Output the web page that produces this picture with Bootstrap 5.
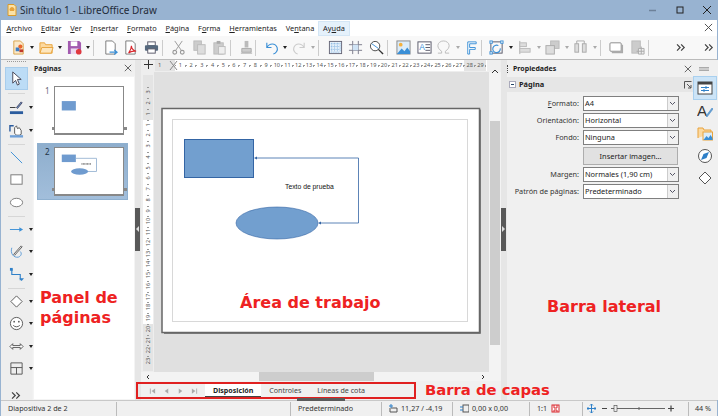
<!DOCTYPE html>
<html lang="es">
<head>
<meta charset="utf-8">
<title>LibreOffice Draw</title>
<link href="https://cdn.jsdelivr.net/npm/bootstrap@5.3.0/dist/css/bootstrap.min.css" rel="stylesheet">
<style>
html,body{margin:0;height:416px;width:718px;overflow:hidden;background:#f0f0f0}
body{font-family:"Noto Sans","Open Sans",sans-serif;font-size:8px;line-height:1;color:#333}
#app{width:718px;height:416px;position:relative;border-left:1px solid #98b3d1;border-right:1px solid #98b3d1;box-sizing:border-box}
.tbar{height:20px;background:#98b3d1;margin-left:-1px;margin-right:-1px;padding-left:7px;font-size:10px;color:#1f2b3a}
.tbar svg{width:10px;height:12px;margin-right:3px}
.wctl{margin-left:auto;margin-right:0;width:70px;padding-right:6px}
.wctl svg{width:10px;height:10px;margin:0}
.mbar{height:16px;background:#fff;padding-left:1px;position:relative}
.mitem{padding:0 4.4px;height:13px;line-height:13px;color:#222;font-size:7.4px}
.mitem u{text-decoration-thickness:.5px;text-underline-offset:1px}
.mitem.act{background:#e5f1fb;outline:1px solid #d4e6f5;margin-left:0}
.mclose{position:absolute;right:4px;top:3px;width:9px;height:9px}
.tool-row{height:23px;background:#f8f8f8;padding-left:8px}
.ti{width:20.5px;height:20px;flex:none}
.ti svg{width:15px;height:15px}
.ti.n{width:18px}
.car{width:10px;height:20px;flex:none}
.car:after{content:"";border-left:2.5px solid transparent;border-right:2.5px solid transparent;border-top:3px solid #222}
.car.g:after{border-top-color:#aaa}
.sep{width:7px;height:16px;flex:none}
.sep:after{content:"";width:1px;height:16px;background:#ccc}
.mainrow{height:341px;border-top:1px solid #bbb}
.lbar{width:31px;flex:none;background:#eee;position:relative}
.grip{height:6px;margin:1px 6px 0;border-top:1px dotted #999;flex:none}
.lrow{height:22.5px;padding-left:5px;flex:none}
.lrow .ti{width:21px;height:21px}
.lrow .car{width:7px}
.lrow .ti.on{background:#bcdcf6;outline:1px solid #a8cdec}
.lsep{height:1px;background:#d6d6d6;margin:2px 7px 1.5px 7px;flex:none}
.lsep.wide{margin:3px 7px 3px 7px}
.pgpanel{width:102px;flex:none;margin-left:1px;background:#f0f0f0}
.phead{height:16px;padding:0 3px 0 1px;font-weight:700;font-size:7px;color:#222;flex:none}
.phead svg{width:8px;height:8px}
.plist{background:#fff;flex:1;position:relative;border:1px solid #f4f4f4}
.pcell{margin:6px 7px 0 4px;height:55px;padding-left:16px;padding-top:3px;position:relative}
.pcell:before,.pcell:after{content:"";position:absolute;top:44px;width:3px;height:3px;background:#888}
.pcell:before{left:14px}
.pcell:after{left:86px}
.pcell.sel{background:linear-gradient(#8eaecd,#a2bedb);outline:1px solid #8fb0cf}
.pnum{position:absolute;left:7px;top:4px;font-size:8px;color:#667}
.pcell.sel .pnum{color:#234}
.pthumb{width:70px;height:49px;background:#fff;border:1px solid #888;border-bottom-width:2px;display:block}
.split{width:6px;flex:none;background:#e6e6e6;position:relative}
.shandle{position:absolute;top:148px;height:43px;left:0;width:5px;background:#585858}
.shandle:after{content:"";position:absolute;top:18px;border-top:3px solid transparent;border-bottom:3px solid transparent}
.shandle.l:after{left:1px;border-right:3px solid #ddd}
.shandle.r:after{left:1px;border-left:3px solid #ddd}
.center{width:360px;flex:none}
.hrow{height:12px;background:#eee}
.cross{width:14px;flex:none;padding-left:3px}
.cross svg{width:9px;height:9px}
.hr-ruler{width:332px;height:11px;background:#fff;font-size:6px;color:#555;position:relative;flex:none;overflow:hidden;margin-left:0}
.rgl{background:#e4e4e4;width:20px;height:11px;flex:none;padding-left:3px;line-height:11px;font-size:5.8px}
.rx{position:absolute;left:14px;top:1px;width:9px;height:9px}
.rnum{width:10.72px;text-align:center;flex:none;line-height:11px;font-size:5.6px;background:linear-gradient(#999,#999) no-repeat 0 50%/1px 1px,linear-gradient(#999,#999) no-repeat 100% 50%/1px 2px}
.rnum.gr{background-color:#e4e4e4}
.crow{height:300px}
.vr-wrap{width:13px;flex:none;background:#eee;padding:3px 1px 0 2px}
.vr-ruler{background:#fff;height:296px;width:10px;font-size:5.6px;color:#555;overflow:hidden}
.vgl{background:#e4e4e4;height:45px;flex:none;width:100%}
.vgl2{background:#e4e4e4;flex:1;width:100%}
.vnum{height:10.76px;flex:none;width:100%;text-align:center;line-height:10px;background:linear-gradient(#999,#999) no-repeat 50% 0/2px 1px}
.vnum span{display:inline-block;transform:rotate(-90deg)}
.wsp{width:335px;flex:none;background:#e0e0e0}
.wsp svg{display:block;width:335px;height:300px}
.vsb{width:12px;flex:none;background:#f3f3f3;position:relative;padding-top:0}
.vsb i{display:block;height:224px;margin-top:49px;background:#cdcdcd;width:10px;margin-left:1px}
.sbup{position:absolute;left:2px;top:-4px;width:8px;height:6px}
.hsb{height:10px;background:#f3f3f3;position:relative}
.hsb i{display:block;position:absolute;left:118px;width:115px;height:10px;background:#cdcdcd}
.hsb svg{position:absolute;top:2px;width:6px;height:6px}
.hsb svg.hr{left:339px}
.laybar{height:19px;background:#f0f0f0;position:relative;padding-left:4px}
.lnav{width:14px;flex:none;height:12px}
.lnav svg{width:7px;height:8px}
.ltab{height:13px;padding:0 8px;line-height:12px;font-size:7.1px;color:#444;flex:none}
.ltab.cur{font-weight:700;background:#fff;border-bottom:1.5px solid #444;color:#222;padding:0 8px;margin-left:4px;font-size:7.1px}
.sideb{width:213px;flex:none;background:#f0f0f0;position:relative}
.spanel{width:187px;flex:none}
.shead{height:17px;padding:0 2px 0 0;font-weight:700;font-size:7px;color:#222;flex:none}
.shead svg{width:8px;height:8px}
.dots{width:5px;height:8px;border-left:1px dotted #444;margin-right:1px;margin-left:0}
.sec{height:15px;background:#e6e6e6;font-weight:700;padding:0 2px;font-size:7.4px;color:#222;flex:none}
.secm{width:7px;height:7px;border:1px solid #aab;background:#fff;margin-right:3px;position:relative;flex:none}
.secm:after{content:"";position:absolute;left:1px;top:2px;width:3px;height:1px;background:#246}
.sec svg{width:8px;height:8px}
.frow{height:15px;margin-bottom:2px;flex:none}
.flab{width:72px;text-align:right;font-size:7.3px;color:#333;margin-right:4px;flex:none;white-space:nowrap}
.fsel{width:96px;height:15px;background:#fff;border:1px solid #7f7f7f;font-size:7.4px;padding-left:1px;color:#222;flex:none;position:relative;line-height:13px}
.fsel b{position:absolute;right:0;top:0;width:11px;height:13px;background:#f0f0f0;border-left:1px solid #ccc}
.fsel svg{position:absolute;right:2px;top:4px;width:7px;height:5px}
.ibtn{width:95px;height:18px;background:#e1e1e1;border:1px solid #adadad;border-radius:0;font-size:7.4px;color:#222;padding:0;margin:0 0 2px 76px;line-height:14px;flex:none}
.stabs{width:23px;flex:none;padding-top:0}
.tabh{height:17px;flex:none}
.tabh i{display:block;width:10px;height:4px;border-top:1px solid #aaa;border-bottom:1px solid #aaa;background:#ccc;margin-left:5px}
.tabi{width:22px;height:22px;margin-bottom:.5px;flex:none}
.tabi.on{background:#cce4f7;outline:1px solid #a9d0ef}
.tabi svg{width:16px;height:16px}
.stat{height:16px;background:#f0f0f0;border-top:1px solid #c8c8c8;font-size:7.2px;color:#333;margin-left:0}
.stc{height:14px;flex:none;border-right:1px solid #bbb;padding-left:7px;white-space:nowrap}
.stc svg{width:9px;height:9px;margin-right:3px;flex:none}
.st1{width:116px}.st2{width:174px}.st3{width:91px}.st4{width:71px}.st5{width:77px}.st6{width:53px}.st7{width:106px;padding-left:4px}.st8{width:28px;padding-left:6px}
.zslg{width:74px!important;height:9px!important;margin:0!important}
.zsl{margin-left:3px}
.notes{color:#ee2222;font-family:"DejaVu Sans",sans-serif;font-weight:700;font-size:16px;line-height:19.5px;position:absolute;white-space:nowrap}
.npanel{left:39px;top:288px}
.narea{left:239px;top:293px}
.nlat{left:546px;top:297px}
.ncap{left:424px;top:380px;font-size:14.8px}
.redbox{position:absolute;left:135px;top:382px;width:280px;height:17px;border:2px solid #e02020}
.hdl2{position:absolute;left:296px;top:398px;width:48px;height:3px;background:#5a5a5a}
</style>
</head>
<body>
<svg width="0" height="0" class="d-none">
<defs>
<symbol id="x" viewBox="0 0 10 10"><path d="M1 1l8 8M9 1l-8 8" stroke="#444" stroke-width="1" fill="none"/></symbol>
<symbol id="dn" viewBox="0 0 7 5"><path d="M1 1l2.5 2.5L6 1" stroke="#556" fill="none"/></symbol>
<symbol id="new" viewBox="0 0 16 16"><path d="M3 1h7l3 3v11H3z" fill="#fbe9c9" stroke="#d9a24a"/><rect x="5" y="8" width="4" height="4" fill="#3f7fc4"/><circle cx="10" cy="7" r="2.2" fill="#e9662c"/><path d="M9 10h4v3H9z" fill="#c0392b"/></symbol>
<symbol id="open" viewBox="0 0 16 16"><path d="M1 14V3h5l1 2h7v9z" fill="#fcd9a0" stroke="#e8a33c"/><path d="M1 14l2-6h12l-2 6z" fill="#fde6bd" stroke="#e8a33c"/></symbol>
<symbol id="save" viewBox="0 0 16 16"><path d="M1 1h12l2 2v12H1z" fill="#a35bb0"/><rect x="4" y="1.500" width="7" height="5" fill="#fff"/><rect x="4" y="9" width="8" height="6" fill="#ecd9ef"/><circle cx="12.500" cy="12.500" r="3" fill="#e0393e"/></symbol>
<symbol id="exp" viewBox="0 0 16 16"><path d="M3 1h7l3 3v11H3z" fill="#fff" stroke="#777"/><path d="M7 13h8M12 10.500l3 2.500-3 2.500" stroke="#3a8fd6" fill="none" stroke-width="1.300"/></symbol>
<symbol id="pdf" viewBox="0 0 16 16"><path d="M3 1h7l3 3v11H3z" fill="#fff" stroke="#777"/><path d="M6 14c2-3 3-6 3-8 0 3 2 5 5 6-3-.5-6 0-8 2z" fill="none" stroke="#d9262c" stroke-width="1.200"/></symbol>
<symbol id="prn" viewBox="0 0 16 16"><rect x="4" y="2" width="8" height="4" fill="#fff" stroke="#556"/><rect x="1" y="5.500" width="14" height="6" rx="1" fill="#55697e"/><rect x="4" y="9.500" width="8" height="4.500" fill="#fff" stroke="#556"/></symbol>
<symbol id="cut" viewBox="0 0 16 16"><path d="M4 1l7 10M12 1L5 11" stroke="#999" fill="none"/><circle cx="4" cy="13" r="2" fill="none" stroke="#999" stroke-width="1.200"/><circle cx="12" cy="13" r="2" fill="none" stroke="#999" stroke-width="1.200"/></symbol>
<symbol id="cpy" viewBox="0 0 16 16"><rect x="2" y="1" width="8" height="10" fill="#ccc" stroke="#bbb"/><rect x="6" y="5" width="8" height="10" fill="#ddd" stroke="#bbb"/></symbol>
<symbol id="pst" viewBox="0 0 16 16"><rect x="2" y="3" width="10" height="12" fill="#ccc" stroke="#bbb"/><rect x="5" y="1" width="4" height="3" fill="#aaa"/><rect x="7" y="7" width="7" height="8" fill="#eee" stroke="#bbb"/></symbol>
<symbol id="cln" viewBox="0 0 16 16"><rect x="6" y="1" width="4" height="7" fill="#bbb"/><path d="M3 9h10v4H3z" fill="#ccc" stroke="#aaa"/><path d="M2 14h12" stroke="#aaa"/></symbol>
<symbol id="und" viewBox="0 0 16 16"><path d="M3 3v5h5M3 8c3-5 9-5 11 0 1 3-1 6-4 7" fill="none" stroke="#3a8fd6" stroke-width="1.200"/></symbol>
<symbol id="red" viewBox="0 0 16 16"><path d="M13 3v5H8M13 8C10 3 4 3 2 8c-1 3 1 6 4 7" fill="none" stroke="#ccc" stroke-width="1.200"/></symbol>
<symbol id="grd" viewBox="0 0 16 16"><rect x="1.500" y="1.500" width="13" height="13" fill="#eaf3fb" stroke="#667"/><path d="M4 3v10M7 3v10M10 3v10M13 3v10M3 4h10M3 7h10M3 10h10M3 13h10" stroke="#5a9ad6" stroke-width=".7" stroke-dasharray="1 1"/></symbol>
<symbol id="hlp" viewBox="0 0 16 16"><path d="M5 1v14M11 1v14M1 5h14M1 11h14" stroke="#778" fill="none"/><rect x="5" y="5" width="6" height="6" fill="#cfe3f5"/></symbol>
<symbol id="zom" viewBox="0 0 16 16"><circle cx="6.500" cy="6.500" r="5" fill="#fff" stroke="#444"/><path d="M10 10l5 5" stroke="#333" stroke-width="1.500"/><path d="M3 4l7 5" stroke="#3a8fd6"/></symbol>
<symbol id="img" viewBox="0 0 16 16"><rect x="1" y="1" width="14" height="14" fill="#dcecf9" stroke="#888"/><circle cx="5" cy="5" r="2" fill="#f5b03c"/><path d="M1 15l5-6 3 3 3-4 3 4v3z" fill="#3a8fd6"/></symbol>
<symbol id="txb" viewBox="0 0 16 16"><rect x="1" y="2" width="14" height="12" fill="#fff" stroke="#556"/><text x="2.500" y="11" font-family="Liberation Sans" font-size="9" fill="#3a8fd6">A</text><path d="M9 5h5M9 8h5M9 11h5" stroke="#556"/></symbol>
<symbol id="omg" viewBox="0 0 16 16"><path d="M2 14h4v-2C3 10 2 8 2 6c0-3 3-5 6-5s6 2 6 5c0 2-1 4-4 6v2h4" fill="none" stroke="#bbb"/></symbol>
<symbol id="fwk" viewBox="0 0 16 16"><path d="M4 2h9v2H6v4h6v2H6v5H4z" fill="#fff" stroke="#3a8fd6"/></symbol>
<symbol id="pts" viewBox="0 0 16 16"><rect x="2" y="2" width="12" height="12" fill="none" stroke="#556"/><path d="M12 9a4 4 0 1 1-2-3" fill="none" stroke="#3a8fd6" stroke-width="1.200"/><g fill="#fff" stroke="#3a8fd6"><rect x="1" y="1" width="2.500" height="2.500"/><rect x="12.500" y="1" width="2.500" height="2.500"/><rect x="1" y="12.500" width="2.500" height="2.500"/></g></symbol>
<symbol id="aln" viewBox="0 0 16 16"><path d="M3 1v14" stroke="#aaa"/><rect x="3" y="3" width="7" height="4" fill="#ddd" stroke="#bbb"/><rect x="3" y="9" width="11" height="4" fill="#ddd" stroke="#bbb"/></symbol>
<symbol id="arr" viewBox="0 0 16 16"><rect x="6" y="1" width="9" height="8" fill="#ccc" stroke="#bbb"/><rect x="1" y="6" width="9" height="9" fill="#ddd" stroke="#aaa"/></symbol>
<symbol id="dst" viewBox="0 0 16 16"><rect x="2" y="4" width="4" height="9" fill="#ddd" stroke="#aaa"/><rect x="10" y="4" width="4" height="9" fill="#ddd" stroke="#aaa"/><path d="M4 1v3M12 1v3M4 1h8" stroke="#aaa" fill="none"/></symbol>
<symbol id="shd" viewBox="0 0 16 16"><rect x="1" y="3" width="12" height="9" rx="1" fill="#fff" stroke="#888"/><path d="M14 5v8H3" stroke="#aaa" stroke-width="2" fill="none"/></symbol>
<symbol id="crp" viewBox="0 0 16 16"><rect x="2" y="1" width="9" height="13" fill="#ccc" stroke="#bbb"/><path d="M9 9h6v6H9z" fill="#eee" stroke="#aaa"/><path d="M12 7v8M7 12h8" stroke="#aaa"/></symbol>
<symbol id="mor" viewBox="0 0 10 8"><path d="M1 1l3 3-3 3M5 1l3 3-3 3" fill="none" stroke="#444" stroke-width="1.200"/></symbol>
<symbol id="sel" viewBox="0 0 16 16"><path d="M4 1v12l3-3 2 5 2-1-2-5h4z" fill="#fff" stroke="#445"/></symbol>
<symbol id="lnc" viewBox="0 0 16 16"><path d="M8 8l5-6 1 1-5 6z" fill="#6fa0cf" stroke="#446"/><path d="M1 8h6" stroke="#333"/><rect x="1" y="12" width="14" height="3" fill="#2b5c9e"/></symbol>
<symbol id="flc" viewBox="0 0 16 16"><path d="M1 9V3h4" stroke="#2b5c9e" fill="none" stroke-width="1.500"/><path d="M6 11V5l2-2 1 3 2-1 2 3v4l-2 1H8z" fill="#fff" stroke="#555"/><rect x="1" y="13" width="14" height="2.500" fill="#6fa0d8"/></symbol>
<symbol id="lin" viewBox="0 0 16 16"><path d="M2 2l12 12" stroke="#3a8fd6" fill="none" stroke-width="1"/></symbol>
<symbol id="rct" viewBox="0 0 16 16"><rect x="2" y="3" width="12" height="10" fill="#fff" stroke="#777"/></symbol>
<symbol id="ell" viewBox="0 0 16 16"><ellipse cx="8" cy="8" rx="6.500" ry="4.500" fill="#fff" stroke="#777"/></symbol>
<symbol id="arw" viewBox="0 0 16 16"><path d="M1 8h11" stroke="#3a8fd6"/><path d="M11 5.500L15 8l-4 2.500z" fill="#3a8fd6"/></symbol>
<symbol id="crv" viewBox="0 0 16 16"><path d="M3 4c-2 6 2 11 7 10 3-1 4-4 2-6" fill="none" stroke="#5a9ad6"/><path d="M5 11l8-9 1 1-8 9z" fill="#fff" stroke="#555"/></symbol>
<symbol id="con" viewBox="0 0 16 16"><path d="M3 2v6h9v6" fill="none" stroke="#2f80c8" stroke-width="1.200"/><rect x="1" y="1" width="3" height="3" fill="#2f80c8"/><path d="M11 12h5l-2.500 3z" fill="#2f80c8"/></symbol>
<symbol id="dmd" viewBox="0 0 16 16"><path d="M8 2l6 6-6 6-6-6z" fill="#fff" stroke="#555"/></symbol>
<symbol id="sml" viewBox="0 0 16 16"><circle cx="8" cy="8" r="6.500" fill="#fff" stroke="#555"/><circle cx="5.500" cy="6" r=".9" fill="#555"/><circle cx="10.500" cy="6" r=".9" fill="#555"/><path d="M4.500 10c2 2 5 2 7 0" fill="none" stroke="#555"/></symbol>
<symbol id="dbl" viewBox="0 0 16 16"><path d="M1 8l3-3v2h8V5l3 3-3 3V9H4v2z" fill="#fff" stroke="#555"/></symbol>
<symbol id="tbl" viewBox="0 0 16 16"><path d="M2 2h12v12H2zM2 7h12M8 7v7" fill="none" stroke="#555"/></symbol>
<symbol id="tprop" viewBox="0 0 16 16"><rect x="1" y="2" width="14" height="12" fill="#fff" stroke="#444"/><rect x="1" y="2" width="14" height="2.500" fill="#444"/><path d="M4 7.500h8M4 10.500h8" stroke="#2f80c8"/><path d="M9 6v3M7 9v3" stroke="#2f80c8"/></symbol>
<symbol id="tsty" viewBox="0 0 16 16"><text x="0" y="13" font-family="Liberation Sans" font-size="15" fill="#333">A</text><path d="M9 13l6-8 1 1-6 8z" fill="#6fa0cf" stroke="#2f80c8" stroke-width=".5"/></symbol>
<symbol id="tgal" viewBox="0 0 16 16"><path d="M1 13V3h5l1 2h7v3" fill="#fcd9a0" stroke="#e8a33c"/><rect x="6" y="7" width="9.500" height="8" fill="#dcecf9" stroke="#e8a33c"/><path d="M6.500 15l3-4 2 2 2-3 2 3v2z" fill="#3a8fd6"/></symbol>
<symbol id="tnav" viewBox="0 0 16 16"><circle cx="8" cy="8" r="6.500" fill="#fff" stroke="#555"/><path d="M12 4l-2.500 6L4 12l2.500-6z" fill="#2f80c8"/></symbol>
<symbol id="pl" viewBox="0 0 8 8"><path d="M6 1L2 4l4 3z" fill="#aaa"/></symbol>
<symbol id="pr" viewBox="0 0 8 8"><path d="M2 1l4 3-4 3z" fill="#aaa"/></symbol>
<symbol id="pf" viewBox="0 0 8 8"><path d="M7 1L3 4l4 3zM1 1h1v6H1z" fill="#aaa"/></symbol>
<symbol id="pe" viewBox="0 0 8 8"><path d="M1 1l4 3-4 3zM6 1h1v6H6z" fill="#aaa"/></symbol>
</defs>
</svg>

<div id="app" class="d-flex flex-column">
  <div class="tbar d-flex align-items-center">
    <svg viewBox="0 0 10 12"><path d="M1 .5h6l2 2v9H1z" fill="#fbe2a8" stroke="#d99a2b"/><path d="M3 7a2.500 2.500 0 1 1 4 0z" fill="#e8a33c"/></svg>
    <span>Sin título 1 - LibreOffice Draw</span>
    <div class="wctl d-flex align-items-center justify-content-between">
      <svg viewBox="0 0 10 10"><path d="M1 5.500h7" stroke="#6d8199" stroke-width="1.500"/></svg>
      <svg viewBox="0 0 10 10"><rect x="2" y="2" width="6" height="6" fill="none" stroke="#222" stroke-width="1"/></svg>
      <svg viewBox="0 0 10 10"><path d="M1 1l8 8M9 1l-8 8" stroke="#222" fill="none"/></svg>
    </div>
  </div>
  <div class="mbar d-flex align-items-center">
    <span class="mitem"><u>A</u>rchivo</span><span class="mitem"><u>E</u>ditar</span><span class="mitem"><u>V</u>er</span><span class="mitem"><u>I</u>nsertar</span><span class="mitem"><u>F</u>ormato</span><span class="mitem"><u>P</u>ágina</span><span class="mitem">F<u>o</u>rma</span><span class="mitem"><u>H</u>erramientas</span><span class="mitem">Ve<u>n</u>tana</span><span class="mitem act">Ay<u>u</u>da</span>
    <svg class="mclose"><use href="#x"/></svg>
  </div>
  <div class="tool-row d-flex align-items-center">
    <span class="ti n d-flex align-items-center justify-content-center"><svg><use href="#new"/></svg></span><span class="car d-flex align-items-center justify-content-center"></span>
    <span class="ti n d-flex align-items-center justify-content-center"><svg><use href="#open"/></svg></span><span class="car d-flex align-items-center justify-content-center"></span>
    <span class="ti n d-flex align-items-center justify-content-center"><svg><use href="#save"/></svg></span><span class="car d-flex align-items-center justify-content-center"></span>
    <span class="sep d-flex align-items-center justify-content-start"></span>
    <span class="ti d-flex align-items-center justify-content-center"><svg><use href="#exp"/></svg></span>
    <span class="ti d-flex align-items-center justify-content-center"><svg><use href="#pdf"/></svg></span>
    <span class="ti d-flex align-items-center justify-content-center"><svg><use href="#prn"/></svg></span>
    <span class="sep d-flex align-items-center justify-content-start"></span>
    <span class="ti d-flex align-items-center justify-content-center"><svg><use href="#cut"/></svg></span>
    <span class="ti d-flex align-items-center justify-content-center"><svg><use href="#cpy"/></svg></span>
    <span class="ti d-flex align-items-center justify-content-center"><svg><use href="#pst"/></svg></span>
    <span class="sep d-flex align-items-center justify-content-start"></span>
    <span class="ti n d-flex align-items-center justify-content-center"><svg><use href="#cln"/></svg></span>
    <span class="sep d-flex align-items-center justify-content-start"></span>
    <span class="ti n d-flex align-items-center justify-content-center"><svg><use href="#und"/></svg></span><span class="car d-flex align-items-center justify-content-center"></span>
    <span class="ti n d-flex align-items-center justify-content-center"><svg><use href="#red"/></svg></span><span class="car g d-flex align-items-center justify-content-center"></span>
    <span class="sep d-flex align-items-center justify-content-start"></span>
    <span class="ti d-flex align-items-center justify-content-center"><svg><use href="#grd"/></svg></span>
    <span class="ti d-flex align-items-center justify-content-center"><svg><use href="#hlp"/></svg></span>
    <span class="ti d-flex align-items-center justify-content-center"><svg><use href="#zom"/></svg></span>
    <span class="sep d-flex align-items-center justify-content-start"></span>
    <span class="ti d-flex align-items-center justify-content-center"><svg><use href="#img"/></svg></span>
    <span class="ti d-flex align-items-center justify-content-center"><svg><use href="#txb"/></svg></span>
    <span class="ti n d-flex align-items-center justify-content-center"><svg><use href="#omg"/></svg></span><span class="car g d-flex align-items-center justify-content-center"></span>
    <span class="ti n d-flex align-items-center justify-content-center"><svg><use href="#fwk"/></svg></span>
    <span class="sep d-flex align-items-center justify-content-start"></span>
    <span class="ti n d-flex align-items-center justify-content-center"><svg><use href="#pts"/></svg></span><span class="car d-flex align-items-center justify-content-center"></span>
    <span class="ti n d-flex align-items-center justify-content-center"><svg><use href="#aln"/></svg></span><span class="car g d-flex align-items-center justify-content-center"></span>
    <span class="ti n d-flex align-items-center justify-content-center"><svg><use href="#arr"/></svg></span><span class="car g d-flex align-items-center justify-content-center"></span>
    <span class="ti n d-flex align-items-center justify-content-center"><svg><use href="#dst"/></svg></span><span class="car g d-flex align-items-center justify-content-center"></span>
    <span class="sep d-flex align-items-center justify-content-start"></span>
    <span class="ti d-flex align-items-center justify-content-center"><svg><use href="#shd"/></svg></span>
    <span class="ti d-flex align-items-center justify-content-center"><svg><use href="#crp"/></svg></span>
    <span class="sep d-flex align-items-center justify-content-start"></span>
    <span class="ti d-flex align-items-center justify-content-center ms-3"><svg class="w-50"><use href="#mor"/></svg></span>
    <span class="ti d-flex align-items-center justify-content-center ms-2"><svg class="w-50"><use href="#mor"/></svg></span>
  </div>

  <div class="mainrow d-flex">
    <div class="lbar d-flex flex-column">
      <div class="grip"></div>
      <div class="lrow d-flex align-items-center"><span class="ti on d-flex align-items-center justify-content-center"><svg><use href="#sel"/></svg></span></div>
      <div class="lsep wide"></div>
      <div class="lrow d-flex align-items-center"><span class="ti d-flex align-items-center justify-content-center"><svg><use href="#lnc"/></svg></span><span class="car d-flex align-items-center justify-content-center"></span></div>
      <div class="lrow d-flex align-items-center"><span class="ti d-flex align-items-center justify-content-center"><svg><use href="#flc"/></svg></span><span class="car d-flex align-items-center justify-content-center"></span></div>
      <div class="lsep"></div>
      <div class="lrow d-flex align-items-center"><span class="ti d-flex align-items-center justify-content-center"><svg><use href="#lin"/></svg></span></div>
      <div class="lrow d-flex align-items-center"><span class="ti d-flex align-items-center justify-content-center"><svg><use href="#rct"/></svg></span></div>
      <div class="lrow d-flex align-items-center"><span class="ti d-flex align-items-center justify-content-center"><svg><use href="#ell"/></svg></span></div>
      <div class="lsep"></div>
      <div class="lrow d-flex align-items-center"><span class="ti d-flex align-items-center justify-content-center"><svg><use href="#arw"/></svg></span><span class="car d-flex align-items-center justify-content-center"></span></div>
      <div class="lrow d-flex align-items-center"><span class="ti d-flex align-items-center justify-content-center"><svg><use href="#crv"/></svg></span><span class="car d-flex align-items-center justify-content-center"></span></div>
      <div class="lrow d-flex align-items-center"><span class="ti d-flex align-items-center justify-content-center"><svg><use href="#con"/></svg></span><span class="car d-flex align-items-center justify-content-center"></span></div>
      <div class="lsep"></div>
      <div class="lrow d-flex align-items-center"><span class="ti d-flex align-items-center justify-content-center"><svg><use href="#dmd"/></svg></span><span class="car d-flex align-items-center justify-content-center"></span></div>
      <div class="lrow d-flex align-items-center"><span class="ti d-flex align-items-center justify-content-center"><svg><use href="#sml"/></svg></span><span class="car d-flex align-items-center justify-content-center"></span></div>
      <div class="lrow d-flex align-items-center"><span class="ti d-flex align-items-center justify-content-center"><svg><use href="#dbl"/></svg></span><span class="car d-flex align-items-center justify-content-center"></span></div>
      <div class="lrow d-flex align-items-center"><span class="ti d-flex align-items-center justify-content-center"><svg><use href="#tbl"/></svg></span><span class="car d-flex align-items-center justify-content-center"></span></div>
      <div class="lrow d-flex align-items-center mt-1"><span class="ti d-flex align-items-center justify-content-center"><svg class="w-50"><use href="#mor"/></svg></span></div>
    </div>

    <div class="pgpanel d-flex flex-column">
      <div class="phead d-flex align-items-center justify-content-between"><span>Páginas</span><svg><use href="#x"/></svg></div>
      <div class="plist">
        <div class="pcell"><span class="pnum">1</span>
          <svg class="pthumb" viewBox="0 0 70 49"><rect x="6" y="15" width="15" height="10" fill="#6f9bcf"/></svg>
        </div>
        <div class="pcell sel"><span class="pnum">2</span>
          <svg class="pthumb" viewBox="0 0 70 49"><rect x="6" y="7" width="15" height="8" fill="#6f9bcf"/><path d="M21 11h22v14H33" fill="none" stroke="#9db7d4"/><path d="M27 17h10" stroke="#222" stroke-dasharray="1 .5"/><ellipse cx="25" cy="25" rx="9" ry="3.500" fill="#6f9bcf"/></svg>
        </div>
      </div>
    </div>
    <div class="split"><span class="shandle l"></span></div>

    <div class="center d-flex flex-column">
      <div class="hrow d-flex">
        <div class="cross"><svg viewBox="0 0 9 9"><path d="M4.500 0v9M0 4.500h9" stroke="#333"/></svg></div>
        <div class="hr-ruler d-flex">
          <div class="rgl">1</div>
          <svg class="rx" viewBox="0 0 9 9"><path d="M1 0l7 9M8 0L1 9" stroke="#888" fill="none"/></svg>
          <span class="rnum">1</span><span class="rnum">2</span><span class="rnum">3</span><span class="rnum">4</span><span class="rnum">5</span><span class="rnum">6</span><span class="rnum">7</span><span class="rnum">8</span><span class="rnum">9</span><span class="rnum">10</span><span class="rnum">11</span><span class="rnum">12</span><span class="rnum">13</span><span class="rnum">14</span><span class="rnum">15</span><span class="rnum">16</span><span class="rnum">17</span><span class="rnum">18</span><span class="rnum">19</span><span class="rnum">20</span><span class="rnum">21</span><span class="rnum">22</span><span class="rnum">23</span><span class="rnum">24</span><span class="rnum">25</span><span class="rnum">26</span><span class="rnum">27</span><span class="rnum gr">28</span><span class="rnum gr">29</span>
        </div>
      </div>
      <div class="crow d-flex">
        <div class="vr-wrap">
          <div class="vr-ruler d-flex flex-column">
            <div class="vgl d-flex flex-column justify-content-end"><div class="vnum"><span>3</span></div><div class="vnum"><span>2</span></div><div class="vnum"><span>1</span></div></div>
            <div class="vnum"><span>1</span></div><div class="vnum"><span>2</span></div><div class="vnum"><span>3</span></div><div class="vnum"><span>4</span></div><div class="vnum"><span>5</span></div><div class="vnum"><span>6</span></div><div class="vnum"><span>7</span></div><div class="vnum"><span>8</span></div><div class="vnum"><span>9</span></div><div class="vnum"><span>10</span></div><div class="vnum"><span>11</span></div><div class="vnum"><span>12</span></div><div class="vnum"><span>13</span></div><div class="vnum"><span>14</span></div><div class="vnum"><span>15</span></div><div class="vnum"><span>16</span></div><div class="vnum"><span>17</span></div><div class="vnum"><span>18</span></div><div class="vnum"><span>19</span></div>
            <div class="vgl2 text-center"><div class="vnum"><span>20</span></div><div class="vnum"><span>21</span></div><div class="vnum"><span>22</span></div><div class="vnum"><span>23</span></div></div>
          </div>
        </div>
        <div class="wsp">
          <svg viewBox="154 72 335 300">
            <rect x="162" y="108.500" width="317.500" height="224" fill="#fff" stroke="#666" stroke-width="1.500"/>
            <path d="M480.500 109.500v224H164" fill="none" stroke="#777" stroke-width="1"/>
            <rect x="172.500" y="119.500" width="295" height="202" fill="none" stroke="#d8d8d8"/>
            <rect x="184.500" y="139.500" width="69" height="38" fill="#729fcf" stroke="#3465a4"/>
            <path d="M256 158h102.500v65H320" fill="none" stroke="#3465a4" stroke-width=".8"/>
            <path d="M254 158l3-1.500v3zM318 223l3-1.500v3z" fill="#3465a4"/>
            <ellipse cx="277" cy="223" rx="41" ry="16" fill="#729fcf" stroke="#3465a4" stroke-width=".6"/>
            <text x="285" y="188.500" font-family="Liberation Sans" font-size="6.800" fill="#111">Texto de prueba</text>
          </svg>
        </div>
        <div class="vsb"><svg class="sbup" viewBox="0 0 8 6"><path d="M1 5l3-3 3 3" stroke="#333" fill="none"/></svg><i></i></div>
      </div>
      <div class="hsb"><svg class="ms-1" viewBox="0 0 6 6"><path d="M4 1L2 3l2 2" stroke="#333" fill="none"/></svg><i></i><svg class="hr" viewBox="0 0 6 6"><path d="M2 1l2 2-2 2" stroke="#333" fill="none"/></svg></div>
      <div class="laybar d-flex align-items-center">
        <span class="lnav d-flex justify-content-center align-items-center"><svg><use href="#pf"/></svg></span>
        <span class="lnav d-flex justify-content-center align-items-center"><svg><use href="#pl"/></svg></span>
        <span class="lnav d-flex justify-content-center align-items-center"><svg><use href="#pr"/></svg></span>
        <span class="lnav d-flex justify-content-center align-items-center"><svg><use href="#pe"/></svg></span>
        <span class="ltab cur">Disposición</span>
        <span class="ltab">Controles</span>
        <span class="ltab">Líneas de cota</span>
      </div>
    </div>
    <div class="split"><span class="shandle r"></span></div>

    <div class="sideb d-flex flex-grow-1">
      <div class="spanel d-flex flex-column">
        <div class="shead d-flex align-items-center justify-content-between"><span class="d-flex align-items-center"><i class="dots"></i>Propiedades</span><svg><use href="#x"/></svg></div>
        <div class="sec d-flex align-items-center mb-1"><span class="secm"></span><span>Página</span><svg class="ms-auto" viewBox="0 0 8 8"><path d="M.5 7.500V.5h7M3 3l4 4M7 4v3H4" fill="none" stroke="#555"/></svg></div>
        <div class="frow d-flex align-items-center"><span class="flab"><u>F</u>ormato:</span><div class="fsel">A4<b></b><svg><use href="#dn"/></svg></div></div>
        <div class="frow d-flex align-items-center"><span class="flab">Orientación:</span><div class="fsel">Horizontal<b></b><svg><use href="#dn"/></svg></div></div>
        <div class="frow d-flex align-items-center"><span class="flab">Fondo:</span><div class="fsel">Ninguna<b></b><svg><use href="#dn"/></svg></div></div>
        <button class="btn ibtn" type="button">Insertar imagen...</button>
        <div class="frow d-flex align-items-center"><span class="flab">Margen:</span><div class="fsel">Normales (1,90 cm)<b></b><svg><use href="#dn"/></svg></div></div>
        <div class="frow d-flex align-items-center"><span class="flab">Patrón de páginas:</span><div class="fsel">Predeterminado<b></b><svg><use href="#dn"/></svg></div></div>
      </div>
      <div class="stabs d-flex flex-column">
        <div class="tabh d-flex align-items-center"><i></i></div>
        <div class="tabi on d-flex align-items-center justify-content-center"><svg><use href="#tprop"/></svg></div>
        <div class="tabi d-flex align-items-center justify-content-center"><svg><use href="#tsty"/></svg></div>
        <div class="tabi d-flex align-items-center justify-content-center"><svg><use href="#tgal"/></svg></div>
        <div class="tabi d-flex align-items-center justify-content-center"><svg><use href="#tnav"/></svg></div>
        <div class="tabi d-flex align-items-center justify-content-center"><svg><use href="#dmd"/></svg></div>
      </div>
    </div>
  </div>

  <div class="stat d-flex align-items-center">
    <div class="stc d-flex align-items-center st1">Diapositiva 2 de 2</div>
    <div class="stc d-flex align-items-center st2"></div>
    <div class="stc d-flex align-items-center st3">Predeterminado</div>
    <div class="stc d-flex align-items-center st4"><svg viewBox="0 0 9 9"><path d="M2 4h6v4H1V4" fill="none" stroke="#555"/><path d="M0 2h4M2 0v4" stroke="#2f80c8"/></svg>11,27 / -4,19</div>
    <div class="stc d-flex align-items-center st5"><svg viewBox="0 0 9 9"><rect x="3" y="1" width="6" height="7" fill="none" stroke="#555"/><path d="M0 3h3M0 6h3" stroke="#2f80c8"/></svg>0,00 x 0,00</div>
    <div class="stc d-flex align-items-center st6">1:1<svg class="ms-1" viewBox="0 0 9 9"><rect x="1" y="1" width="7" height="7" fill="#fff" stroke="#d9262c"/><path d="M3 1v3h3V1M3 8V6h3v2" fill="none" stroke="#d9262c"/></svg></div>
    <div class="stc d-flex align-items-center st7"><svg viewBox="0 0 9 9"><path d="M4.500 0v9M0 4.500h9" stroke="#2f80c8"/><path d="M3 1.500L4.500 0 6 1.500M3 7.500L4.500 9 6 7.500M1.500 3L0 4.500 1.500 6M7.500 3L9 4.500 7.500 6" fill="none" stroke="#2f80c8"/></svg><span class="zsl d-flex align-items-center">
      <svg viewBox="0 0 74 9" class="zslg"><path d="M0 4.500h5M72 4.500h-6M69 1.500v6" stroke="#444" stroke-width="1.200"/><path d="M9 4.500h54" stroke="#666"/><rect x="12" y="1.500" width="3" height="6" fill="#eee" stroke="#444" stroke-width=".6"/><path d="M37 3v3" stroke="#666"/></svg></span></div>
    <div class="stc d-flex align-items-center st8 border-0">44 %</div>
  </div>

  <span class="notes npanel">Panel de<br>páginas</span>
  <span class="notes narea">Área de trabajo</span>
  <span class="notes nlat">Barra lateral</span>
  <span class="notes ncap">Barra de capas</span>
  <span class="redbox"></span>
  <span class="hdl2"></span>
</div>
<script src="https://cdn.jsdelivr.net/npm/bootstrap@5.3.0/dist/js/bootstrap.bundle.min.js"></script>
</body>
</html>
